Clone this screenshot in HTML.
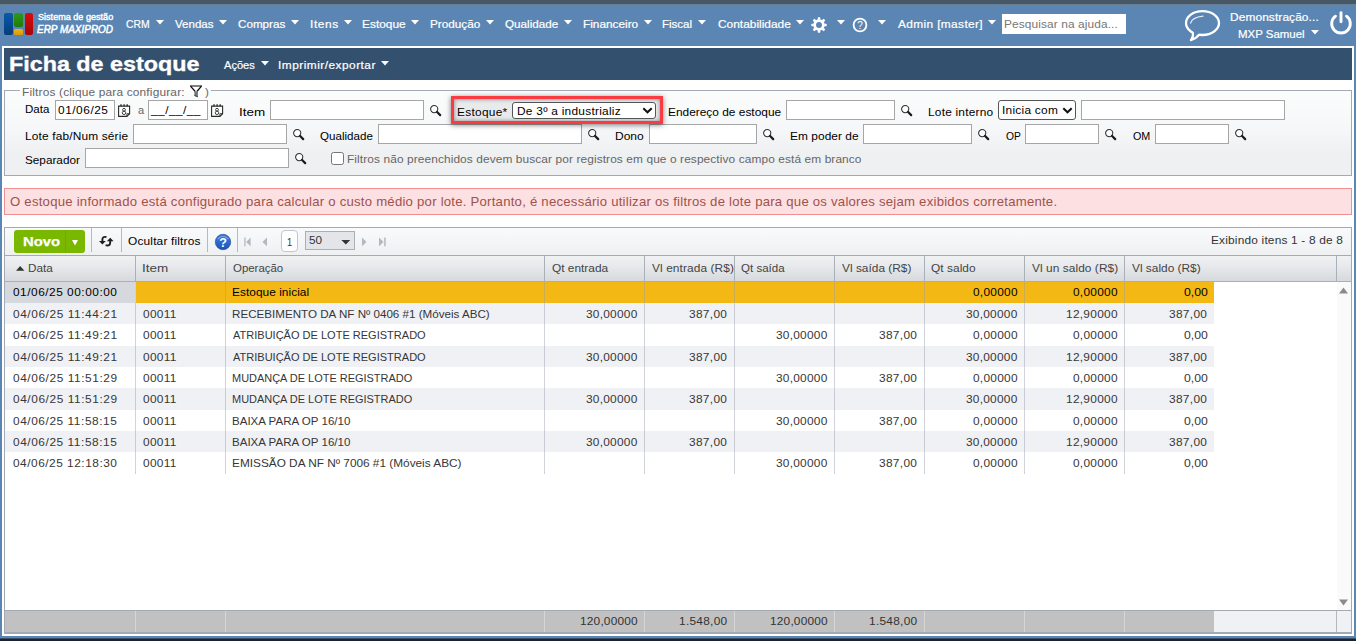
<!DOCTYPE html>
<html><head><meta charset="utf-8"><title>Ficha de estoque</title>
<style>
html,body{margin:0;padding:0}
body{width:1356px;height:641px;overflow:hidden;position:relative;background:#5b86b4;font-family:"Liberation Sans",sans-serif;font-size:12px}
body>div,body>span,body>svg{position:absolute;display:block}
body>div{box-sizing:border-box}
body>span{white-space:pre;line-height:20px;height:20px;transform-origin:0 0}
svg{overflow:visible}
</style></head><body>
<div style="left:0px;top:0px;width:1356px;height:4px;background:#465865"></div>
<div style="left:0px;top:4px;width:1356px;height:42px;background:#5b86b4"></div>
<div style="left:0px;top:4px;width:1356px;height:1px;background:#6b7f92"></div>
<div style="left:0px;top:638px;width:1356px;height:3px;background:#1a2430"></div>
<div style="left:0px;top:637.5px;width:1356px;height:1px;background:#3a5068"></div>
<div style="left:2px;top:46px;width:1352px;height:590px;background:#fff"></div>
<div style="left:4px;top:48px;width:1348px;height:32px;background:#34506f"></div>
<div style="left:4px;top:13px;width:8.7px;height:21.7px;border-radius:2px;background:linear-gradient(#0a5aa8,#053e7c)"></div>
<div style="left:14.2px;top:13px;width:8.7px;height:13.8px;border-radius:2px;background:linear-gradient(#2f9a14,#1f7a0c)"></div>
<div style="left:14.2px;top:28.5px;width:8.7px;height:6.3px;border-radius:1.5px;background:linear-gradient(#f0b31a,#d99808)"></div>
<div style="left:24.5px;top:13px;width:8.6px;height:21.7px;border-radius:2px;background:linear-gradient(#d80c0c,#a80404)"></div>
<span style="left:37.62px;top:6.50px;font-size:9.5px;color:#fff;transform:scaleX(0.9556);-webkit-text-stroke:.4px #fff;">Sistema de gestão</span>
<span style="left:37.45px;top:19.50px;font-size:10px;color:#fff;transform:scaleX(0.9961);font-style:italic;-webkit-text-stroke:.45px #fff;">ERP MAXIPROD</span>
<span style="left:126.03px;top:14.00px;font-size:11px;color:#fff;transform:scaleX(0.9432);-webkit-text-stroke:.2px #fff;">CRM</span>
<svg style="left:156px;top:20.3px;" width="8" height="5" viewBox="0 0 8 5"><path d="M0 0H8L4.0 4.5Z" fill="#fff"/></svg>
<span style="left:174.80px;top:14.00px;font-size:11px;color:#fff;transform:scaleX(1.0483);-webkit-text-stroke:.2px #fff;">Vendas</span>
<svg style="left:219.2px;top:20.3px;" width="8" height="5" viewBox="0 0 8 5"><path d="M0 0H8L4.0 4.5Z" fill="#fff"/></svg>
<span style="left:238.37px;top:14.00px;font-size:11px;color:#fff;transform:scaleX(1.0583);-webkit-text-stroke:.2px #fff;">Compras</span>
<svg style="left:290.9px;top:20.3px;" width="8" height="5" viewBox="0 0 8 5"><path d="M0 0H8L4.0 4.5Z" fill="#fff"/></svg>
<span style="left:309.62px;top:14.00px;font-size:11px;color:#fff;transform:scaleX(1.0800);letter-spacing:0.556px;-webkit-text-stroke:.2px #fff;">Itens</span>
<svg style="left:343.9px;top:20.3px;" width="8" height="5" viewBox="0 0 8 5"><path d="M0 0H8L4.0 4.5Z" fill="#fff"/></svg>
<span style="left:362.12px;top:14.00px;font-size:11px;color:#fff;transform:scaleX(1.0800);letter-spacing:0.008px;-webkit-text-stroke:.2px #fff;">Estoque</span>
<svg style="left:411.2px;top:20.3px;" width="8" height="5" viewBox="0 0 8 5"><path d="M0 0H8L4.0 4.5Z" fill="#fff"/></svg>
<span style="left:429.93px;top:14.00px;font-size:11px;color:#fff;transform:scaleX(1.0667);-webkit-text-stroke:.2px #fff;">Produção</span>
<svg style="left:486px;top:20.3px;" width="8" height="5" viewBox="0 0 8 5"><path d="M0 0H8L4.0 4.5Z" fill="#fff"/></svg>
<span style="left:504.77px;top:14.00px;font-size:11px;color:#fff;transform:scaleX(1.0619);-webkit-text-stroke:.2px #fff;">Qualidade</span>
<svg style="left:563.9px;top:20.3px;" width="8" height="5" viewBox="0 0 8 5"><path d="M0 0H8L4.0 4.5Z" fill="#fff"/></svg>
<span style="left:582.93px;top:14.00px;font-size:11px;color:#fff;transform:scaleX(1.0740);-webkit-text-stroke:.2px #fff;">Financeiro</span>
<svg style="left:644px;top:20.3px;" width="8" height="5" viewBox="0 0 8 5"><path d="M0 0H8L4.0 4.5Z" fill="#fff"/></svg>
<span style="left:662.46px;top:14.00px;font-size:11px;color:#fff;transform:scaleX(1.0444);-webkit-text-stroke:.2px #fff;">Fiscal</span>
<svg style="left:698px;top:20.3px;" width="8" height="5" viewBox="0 0 8 5"><path d="M0 0H8L4.0 4.5Z" fill="#fff"/></svg>
<span style="left:717.76px;top:14.00px;font-size:11px;color:#fff;transform:scaleX(1.0800);letter-spacing:0.012px;-webkit-text-stroke:.2px #fff;">Contabilidade</span>
<svg style="left:796px;top:20.3px;" width="8" height="5" viewBox="0 0 8 5"><path d="M0 0H8L4.0 4.5Z" fill="#fff"/></svg>
<span style="left:897.50px;top:14.00px;font-size:11px;color:#fff;transform:scaleX(1.0800);letter-spacing:0.341px;-webkit-text-stroke:.2px #fff;">Admin [master]</span>
<svg style="left:988px;top:20.3px;" width="8" height="5" viewBox="0 0 8 5"><path d="M0 0H8L4.0 4.5Z" fill="#fff"/></svg>
<svg style="left:836.8px;top:20.3px;" width="8" height="5" viewBox="0 0 8 5"><path d="M0 0H8L4.0 4.5Z" fill="#fff"/></svg>
<svg style="left:877.9px;top:20.3px;" width="8" height="5" viewBox="0 0 8 5"><path d="M0 0H8L4.0 4.5Z" fill="#fff"/></svg>
<svg style="left:811px;top:16.5px;" width="16" height="16" viewBox="0 0 16 16"><g transform="translate(8,8)" fill="none" stroke="#fff"><circle r="4.3" stroke-width="2.7"/><path d="M-1.5 -5.2H1.5L1.05 -7.7H-1.05Z" fill="#fff" stroke="none" transform="rotate(0)"/><path d="M-1.5 -5.2H1.5L1.05 -7.7H-1.05Z" fill="#fff" stroke="none" transform="rotate(45)"/><path d="M-1.5 -5.2H1.5L1.05 -7.7H-1.05Z" fill="#fff" stroke="none" transform="rotate(90)"/><path d="M-1.5 -5.2H1.5L1.05 -7.7H-1.05Z" fill="#fff" stroke="none" transform="rotate(135)"/><path d="M-1.5 -5.2H1.5L1.05 -7.7H-1.05Z" fill="#fff" stroke="none" transform="rotate(180)"/><path d="M-1.5 -5.2H1.5L1.05 -7.7H-1.05Z" fill="#fff" stroke="none" transform="rotate(225)"/><path d="M-1.5 -5.2H1.5L1.05 -7.7H-1.05Z" fill="#fff" stroke="none" transform="rotate(270)"/><path d="M-1.5 -5.2H1.5L1.05 -7.7H-1.05Z" fill="#fff" stroke="none" transform="rotate(315)"/></g></svg>
<svg style="left:852px;top:17px;" width="16" height="16" viewBox="0 0 16 16"><circle cx="8" cy="8" r="6.4" fill="none" stroke="#fff" stroke-width="1.8"/><text x="8" y="11.6" font-size="10" font-weight="400" fill="#fff" text-anchor="middle" font-family="Liberation Sans">?</text></svg>
<div style="left:1002px;top:14px;width:124px;height:19.5px;background:#fff"></div>
<span style="left:1003.52px;top:14.00px;font-size:11px;color:#777;transform:scaleX(1.0800);letter-spacing:0.100px;">Pesquisar na ajuda...</span>
<svg style="left:1183px;top:8px;" width="40" height="35" viewBox="0 0 40 35"><ellipse cx="19.5" cy="15.1" rx="16.5" ry="11.9" fill="none" stroke="#fff" stroke-width="2.3"/><path d="M10.6 22.6L8 32L17.2 24.6Z" fill="#5b86b4"/><path d="M9.9 24.9Q10.6 29 7.9 32.2Q12.6 31 16 27" fill="none" stroke="#fff" stroke-width="2.2" stroke-linejoin="round" stroke-linecap="round"/><path d="M7.6 15.2Q9 9.4 20 8.2" fill="none" stroke="#e6edf5" stroke-width="1.25" stroke-linecap="round"/></svg>
<span style="left:1230.12px;top:7.00px;font-size:11px;color:#fff;transform:scaleX(1.0800);letter-spacing:0.103px;-webkit-text-stroke:.2px #fff;">Demonstração...</span>
<span style="left:1238.46px;top:24.00px;font-size:11px;color:#fff;transform:scaleX(1.0416);-webkit-text-stroke:.2px #fff;">MXP Samuel</span>
<svg style="left:1311.4px;top:30px;" width="8" height="5" viewBox="0 0 8 5"><path d="M0 0H8L4.0 4.5Z" fill="#fff"/></svg>
<svg style="left:1329px;top:10px;" width="24" height="26" viewBox="0 0 24 26"><path d="M6.5 6.2 A9.3 9.3 0 1 0 17.5 6.2" fill="none" stroke="#fff" stroke-width="2.9" stroke-linecap="round"/><path d="M12 2.6V11.8" stroke="#fff" stroke-width="2.9" stroke-linecap="round"/></svg>
<span style="left:8.78px;top:53.50px;font-size:20.5px;color:#fff;transform:scaleX(1.1372);font-weight:700;-webkit-text-stroke:.35px #fff;">Ficha de estoque</span>
<span style="left:224.20px;top:55.00px;font-size:11px;color:#fff;transform:scaleX(1.0083);-webkit-text-stroke:.2px #fff;">Ações</span>
<svg style="left:261.2px;top:60.8px;" width="8" height="5" viewBox="0 0 8 5"><path d="M0 0H8L4.0 4.5Z" fill="#fff"/></svg>
<span style="left:277.62px;top:55.00px;font-size:11px;color:#fff;transform:scaleX(1.0800);letter-spacing:0.442px;-webkit-text-stroke:.2px #fff;">Imprimir/exportar</span>
<svg style="left:381.2px;top:60.8px;" width="8" height="5" viewBox="0 0 8 5"><path d="M0 0H8L4.0 4.5Z" fill="#fff"/></svg>
<div style="left:4px;top:90px;width:1348px;height:86px;border:1px solid #a3aab3;background:linear-gradient(#fbfcfc 0,#f6f7f8 45%,#eff0f2 75%)"></div>
<div style="left:20px;top:90px;width:191px;height:1px;background:#fdfdfd"></div>
<span style="left:21.82px;top:82.00px;font-size:11px;color:#666;transform:scaleX(1.0800);letter-spacing:0.162px;">Filtros (clique para configurar:</span>
<svg style="left:190px;top:84.5px;" width="13" height="13" viewBox="0 0 13 13"><path d="M0 1H12" stroke="#0a0a0a" stroke-width="1.05"/><path d="M0.5 1.2L5.2 6.5M11.5 1.2L6.9 6.5" stroke="#0a0a0a" stroke-width="1.25" fill="none"/><path d="M4.35 6.2H7.9V12L4.35 10.7Z" fill="#757575"/><path d="M4.35 10.5L7.9 11.8" stroke="#333" stroke-width=".9"/></svg>
<span style="left:205.24px;top:82.00px;font-size:11px;color:#666;transform:scaleX(1.0545);">)</span>
<span style="left:24.85px;top:99.00px;font-size:11px;color:#000;transform:scaleX(1.0472);">Data</span>
<div style="left:55px;top:100px;width:60px;height:20px;border:1px solid #a6a6a6;background:#fff"></div>
<span style="left:57.66px;top:100.00px;font-size:11px;color:#000;transform:scaleX(1.0800);letter-spacing:0.491px;">01/06/25</span>
<svg style="left:118px;top:104px;" width="13" height="14" viewBox="0 0 13 14"><path d="M0.6 2.1H11.6V9.7L8.9 12.4H0.6Z" fill="#fff" stroke="#2a2a2a" stroke-width="1.1" stroke-linejoin="miter"/><path d="M8.9 12.4V9.7H11.6" fill="none" stroke="#2a2a2a" stroke-width=".9"/><path d="M3 0.3V2.2M6.1 0.3V2.2M9.2 0.3V2.2" stroke="#2a2a2a" stroke-width="1.3"/><g fill="none" stroke="#3a3a3a" stroke-width=".95"><ellipse cx="6" cy="5.75" rx="1.4" ry="1.4"/><ellipse cx="6" cy="8.85" rx="1.75" ry="1.7"/></g></svg>
<span style="left:138.00px;top:100.00px;font-size:11px;color:#666;transform:scaleX(1.0000);">a</span>
<div style="left:148px;top:100px;width:59.5px;height:20px;border:1px solid #a6a6a6;background:#fff"></div>
<span style="left:150.87px;top:100.00px;font-size:11px;color:#000;transform:scaleX(1.0800);letter-spacing:0.422px;">__/__/__</span>
<svg style="left:211px;top:104px;" width="13" height="14" viewBox="0 0 13 14"><path d="M0.6 2.1H11.6V9.7L8.9 12.4H0.6Z" fill="#fff" stroke="#2a2a2a" stroke-width="1.1" stroke-linejoin="miter"/><path d="M8.9 12.4V9.7H11.6" fill="none" stroke="#2a2a2a" stroke-width=".9"/><path d="M3 0.3V2.2M6.1 0.3V2.2M9.2 0.3V2.2" stroke="#2a2a2a" stroke-width="1.3"/><g fill="none" stroke="#3a3a3a" stroke-width=".95"><ellipse cx="6" cy="5.75" rx="1.4" ry="1.4"/><ellipse cx="6" cy="8.85" rx="1.75" ry="1.7"/></g></svg>
<span style="left:239.38px;top:102.00px;font-size:11px;color:#000;transform:scaleX(1.2203);">Item</span>
<div style="left:270px;top:100px;width:154px;height:20px;border:1px solid #a6a6a6;background:#fff"></div>
<svg style="left:429.8px;top:104.7px;" width="12" height="12" viewBox="0 0 12 12"><circle cx="4.2" cy="4.1" r="3.6" fill="#fdfdfd" stroke="#2e2e2e" stroke-width="1.05"/><path d="M7.1 7L10.2 10.1" stroke="#1c1c1c" stroke-width="2.2" stroke-linecap="round"/></svg>
<div style="left:451px;top:96px;width:212px;height:28px;z-index:2;box-sizing:border-box;border:3px solid #fa3c42;background:#e9eaec;box-shadow:0 1px 5px rgba(0,0,0,.5), inset 0 0 4px rgba(0,0,0,.45)"></div>
<span style="left:456.82px;top:102.00px;font-size:11px;color:#000;transform:scaleX(1.0800);letter-spacing:0.267px;z-index:3;">Estoque*</span>
<div style="left:512px;top:102px;width:144px;height:17px;z-index:3;border:1px solid #555;border-radius:3px;background:#fff"></div>
<span style="left:516.62px;top:101.00px;font-size:11px;color:#000;transform:scaleX(1.0800);letter-spacing:0.239px;z-index:4;">De 3º a industrializ</span>
<svg style="left:641.5px;top:107px;z-index:4;" width="11" height="7" viewBox="0 0 11 7"><path d="M1.3 1.3L5.5 5.3L9.7 1.3" fill="none" stroke="#111" stroke-width="2"/></svg>
<span style="left:668.32px;top:102.00px;font-size:11px;color:#000;transform:scaleX(1.0800);letter-spacing:0.008px;">Endereço de estoque</span>
<div style="left:786px;top:100px;width:109px;height:20px;border:1px solid #a6a6a6;background:#fff"></div>
<svg style="left:900.9px;top:104.7px;" width="12" height="12" viewBox="0 0 12 12"><circle cx="4.2" cy="4.1" r="3.6" fill="#fdfdfd" stroke="#2e2e2e" stroke-width="1.05"/><path d="M7.1 7L10.2 10.1" stroke="#1c1c1c" stroke-width="2.2" stroke-linecap="round"/></svg>
<span style="left:927.82px;top:102.00px;font-size:11px;color:#000;transform:scaleX(1.0800);letter-spacing:0.194px;">Lote interno</span>
<div style="left:998px;top:100px;width:77.5px;height:20px;border:1px solid #555;border-radius:3px;background:#fff"></div>
<span style="left:1002.12px;top:100.00px;font-size:11px;color:#000;transform:scaleX(1.0800);letter-spacing:0.240px;">Inicia com</span>
<svg style="left:1062px;top:107px;" width="11" height="7" viewBox="0 0 11 7"><path d="M1.3 1.3L5.5 5.3L9.7 1.3" fill="none" stroke="#111" stroke-width="2"/></svg>
<div style="left:1081px;top:100px;width:204px;height:20px;border:1px solid #a6a6a6;background:#fff"></div>
<span style="left:24.82px;top:126.00px;font-size:11px;color:#000;transform:scaleX(1.0800);letter-spacing:0.146px;">Lote fab/Num série</span>
<div style="left:133px;top:124px;width:154px;height:20px;border:1px solid #a6a6a6;background:#fff"></div>
<svg style="left:293px;top:128.7px;" width="12" height="12" viewBox="0 0 12 12"><circle cx="4.2" cy="4.1" r="3.6" fill="#fdfdfd" stroke="#2e2e2e" stroke-width="1.05"/><path d="M7.1 7L10.2 10.1" stroke="#1c1c1c" stroke-width="2.2" stroke-linecap="round"/></svg>
<span style="left:320.17px;top:126.00px;font-size:11px;color:#000;transform:scaleX(1.0538);">Qualidade</span>
<div style="left:378.4px;top:124px;width:203.20000000000005px;height:20px;border:1px solid #a6a6a6;background:#fff"></div>
<svg style="left:587.8px;top:128.7px;" width="12" height="12" viewBox="0 0 12 12"><circle cx="4.2" cy="4.1" r="3.6" fill="#fdfdfd" stroke="#2e2e2e" stroke-width="1.05"/><path d="M7.1 7L10.2 10.1" stroke="#1c1c1c" stroke-width="2.2" stroke-linecap="round"/></svg>
<span style="left:614.71px;top:126.00px;font-size:11px;color:#000;transform:scaleX(1.0909);">Dono</span>
<div style="left:648.5px;top:124px;width:108.29999999999995px;height:20px;border:1px solid #a6a6a6;background:#fff"></div>
<svg style="left:763px;top:128.7px;" width="12" height="12" viewBox="0 0 12 12"><circle cx="4.2" cy="4.1" r="3.6" fill="#fdfdfd" stroke="#2e2e2e" stroke-width="1.05"/><path d="M7.1 7L10.2 10.1" stroke="#1c1c1c" stroke-width="2.2" stroke-linecap="round"/></svg>
<span style="left:789.72px;top:126.00px;font-size:11px;color:#000;transform:scaleX(1.0800);letter-spacing:0.054px;">Em poder de</span>
<div style="left:863.2px;top:124px;width:108.5px;height:20px;border:1px solid #a6a6a6;background:#fff"></div>
<svg style="left:977.9px;top:128.7px;" width="12" height="12" viewBox="0 0 12 12"><circle cx="4.2" cy="4.1" r="3.6" fill="#fdfdfd" stroke="#2e2e2e" stroke-width="1.05"/><path d="M7.1 7L10.2 10.1" stroke="#1c1c1c" stroke-width="2.2" stroke-linecap="round"/></svg>
<span style="left:1005.73px;top:126.00px;font-size:11px;color:#000;transform:scaleX(0.9356);">OP</span>
<div style="left:1025px;top:124px;width:74px;height:20px;border:1px solid #a6a6a6;background:#fff"></div>
<svg style="left:1104.8px;top:128.7px;" width="12" height="12" viewBox="0 0 12 12"><circle cx="4.2" cy="4.1" r="3.6" fill="#fdfdfd" stroke="#2e2e2e" stroke-width="1.05"/><path d="M7.1 7L10.2 10.1" stroke="#1c1c1c" stroke-width="2.2" stroke-linecap="round"/></svg>
<span style="left:1132.51px;top:126.00px;font-size:11px;color:#000;transform:scaleX(0.9785);">OM</span>
<div style="left:1155.3px;top:124px;width:73.40000000000009px;height:20px;border:1px solid #a6a6a6;background:#fff"></div>
<svg style="left:1234.9px;top:128.7px;" width="12" height="12" viewBox="0 0 12 12"><circle cx="4.2" cy="4.1" r="3.6" fill="#fdfdfd" stroke="#2e2e2e" stroke-width="1.05"/><path d="M7.1 7L10.2 10.1" stroke="#1c1c1c" stroke-width="2.2" stroke-linecap="round"/></svg>
<span style="left:25.37px;top:150.00px;font-size:11px;color:#000;transform:scaleX(1.0680);">Separador</span>
<div style="left:85.3px;top:148px;width:203.39999999999998px;height:20px;border:1px solid #a6a6a6;background:#fff"></div>
<svg style="left:294.7px;top:152.7px;" width="12" height="12" viewBox="0 0 12 12"><circle cx="4.2" cy="4.1" r="3.6" fill="#fdfdfd" stroke="#2e2e2e" stroke-width="1.05"/><path d="M7.1 7L10.2 10.1" stroke="#1c1c1c" stroke-width="2.2" stroke-linecap="round"/></svg>
<div style="left:331px;top:152px;width:13px;height:13px;border:1px solid #767676;border-radius:2.5px;background:#fff"></div>
<span style="left:346.52px;top:149.00px;font-size:11px;color:#666;transform:scaleX(1.0800);letter-spacing:0.096px;">Filtros não preenchidos devem buscar por registros em que o respectivo campo está em branco</span>
<div style="left:4px;top:188px;width:1348px;height:27px;border:1px solid #f19090;background:#fce0e2"></div>
<span style="left:9.96px;top:192.00px;font-size:12.2px;color:#a0524c;transform:scaleX(1.0800);letter-spacing:0.212px;">O estoque informado está configurado para calcular o custo médio por lote. Portanto, é necessário utilizar os filtros de lote para que os valores sejam exibidos corretamente.</span>
<div style="left:4px;top:227px;width:1348px;height:407px;border:1px solid #a3aab3;border-bottom-width:2px;background:#fff"></div>
<div style="left:5px;top:228px;width:1346px;height:27px;background:linear-gradient(#f9fafb,#eef0f2)"></div>
<div style="left:14px;top:230px;width:71px;height:23px;border-radius:3px;background:#7ab800"></div>
<div style="left:65px;top:230px;width:1px;height:23px;background:#70aa04"></div>
<span style="left:23.29px;top:232.00px;font-size:12.3px;color:#fff;transform:scaleX(1.2068);font-weight:700;-webkit-text-stroke:.25px #fff;">Novo</span>
<svg style="left:71.8px;top:239.6px;" width="7" height="7" viewBox="0 0 7 7"><path d="M0 0H6L3 5.4Z" fill="#fff"/></svg>
<div style="left:91px;top:228px;width:1px;height:24px;background:#b4bac2"></div>
<div style="left:121px;top:228px;width:1px;height:24px;background:#b4bac2"></div>
<div style="left:207px;top:228px;width:1px;height:24px;background:#b4bac2"></div>
<div style="left:237px;top:228px;width:1px;height:24px;background:#b4bac2"></div>
<svg style="left:98.9px;top:235.8px;" width="15" height="11" viewBox="0 0 15 11"><g fill="none" stroke="#1e1e1e" stroke-width="1.9"><path d="M7.5 1.2Q3.4 0 3.4 3.6V5.6"/><path d="M6.6 9.1Q11.2 10.4 11.2 6.6V4.8"/></g><path d="M0 5.1H6.8L3.4 8.6Z" fill="#1e1e1e"/><path d="M7.8 5.3H14.6L11.2 1.8Z" fill="#1e1e1e"/></svg>
<span style="left:128.36px;top:231.00px;font-size:11px;color:#000;transform:scaleX(1.0800);letter-spacing:0.164px;">Ocultar filtros</span>
<svg style="left:214.1px;top:233px;" width="18" height="18" viewBox="0 0 18 18"><defs><linearGradient id="hb" x1="0" y1="0" x2="0" y2="1"><stop offset="0" stop-color="#3f78d4"/><stop offset=".45" stop-color="#2f6ccd"/><stop offset="1" stop-color="#1d52b4"/></linearGradient></defs><circle cx="9" cy="9" r="7.7" fill="url(#hb)" stroke="#2450a6" stroke-width=".7"/><path d="M3.6 6.2Q9 0.2 14.4 6.2" fill="none" stroke="#86b2ee" stroke-width="1.1" opacity=".8"/><text x="9" y="14.1" font-size="12.5" font-weight="700" fill="#fff" text-anchor="middle" font-family="Liberation Sans">?</text></svg>
<svg style="left:243.8px;top:237px;" width="8" height="10" viewBox="0 0 8 10"><path d="M0.3 0.5H1.6V9.3H0.3Z M6.6 0.5V9.3L2.2 4.9Z" fill="#b3b8bf"/></svg>
<svg style="left:262px;top:237px;" width="6" height="10" viewBox="0 0 6 10"><path d="M5 0.5V9.3L0.5 4.9Z" fill="#b3b8bf"/></svg>
<div style="left:281px;top:230px;width:17px;height:22px;box-sizing:border-box;border:1px solid #c3c7cc;border-radius:4px;background:#fff"></div>
<span style="left:286.77px;top:232.00px;font-size:11px;color:#333;transform:scaleX(0.8421);">1</span>
<div style="left:305px;top:231px;width:50px;height:19px;box-sizing:border-box;border:1px solid #aab0b7;background:#e3e5e8"></div>
<span style="left:308.87px;top:230.00px;font-size:11px;color:#333;transform:scaleX(1.0667);">50</span>
<svg style="left:341px;top:240px;" width="10" height="5" viewBox="0 0 10 5"><path d="M0.4 0H9.2L4.8 4.6Z" fill="#333"/></svg>
<svg style="left:361px;top:237px;" width="6" height="10" viewBox="0 0 6 10"><path d="M1 0.5V9.3L5.5 4.9Z" fill="#b3b8bf"/></svg>
<svg style="left:378px;top:237px;" width="8" height="10" viewBox="0 0 8 10"><path d="M6.2 0.5H7.7V9.3H6.2Z M1 0.5V9.3L5.6 4.9Z" fill="#b3b8bf"/></svg>
<span style="left:1210.72px;top:230.00px;font-size:11px;color:#333;transform:scaleX(1.0800);letter-spacing:0.173px;">Exibindo itens 1 - 8 de 8</span>
<div style="left:5px;top:255px;width:1346px;height:1px;background:#a3aab3"></div>
<div style="left:5px;top:256px;width:1346px;height:25px;background:linear-gradient(#eff1f3 0,#e6e8eb 45%,#d6d9dd 100%)"></div>
<div style="left:5px;top:281px;width:1346px;height:1px;background:#a9afb7"></div>
<div style="left:135px;top:256px;width:1px;height:25px;background:#aab0b8"></div>
<div style="left:225px;top:256px;width:1px;height:25px;background:#aab0b8"></div>
<div style="left:544px;top:256px;width:1px;height:25px;background:#aab0b8"></div>
<div style="left:644px;top:256px;width:1px;height:25px;background:#aab0b8"></div>
<div style="left:734px;top:256px;width:1px;height:25px;background:#aab0b8"></div>
<div style="left:834px;top:256px;width:1px;height:25px;background:#aab0b8"></div>
<div style="left:924px;top:256px;width:1px;height:25px;background:#aab0b8"></div>
<div style="left:1024px;top:256px;width:1px;height:25px;background:#aab0b8"></div>
<div style="left:1124px;top:256px;width:1px;height:25px;background:#aab0b8"></div>
<div style="left:1336px;top:256px;width:1px;height:25px;background:#aab0b8"></div>
<svg style="left:15.8px;top:266.4px;" width="9" height="5" viewBox="0 0 9 5"><path d="M0 4.7H8.4L4.2 0.1Z" fill="#333"/></svg>
<span style="left:28.23px;top:258.00px;font-size:11px;color:#444;transform:scaleX(1.0652);">Data</span>
<span style="left:141.57px;top:258.00px;font-size:11px;color:#444;transform:scaleX(1.2253);">Item</span>
<span style="left:232.78px;top:258.00px;font-size:11px;color:#444;transform:scaleX(1.0392);">Operação</span>
<span style="left:551.56px;top:258.00px;font-size:11px;color:#444;transform:scaleX(1.0796);">Qt entrada</span>
<span style="left:652.10px;top:258.00px;font-size:11px;color:#444;transform:scaleX(1.0800);letter-spacing:0.091px;">Vl entrada (R$)</span>
<span style="left:741.48px;top:258.00px;font-size:11px;color:#444;transform:scaleX(1.0488);">Qt saída</span>
<span style="left:842.00px;top:258.00px;font-size:11px;color:#444;transform:scaleX(1.0800);letter-spacing:0.009px;">Vl saída (R$)</span>
<span style="left:931.46px;top:258.00px;font-size:11px;color:#444;transform:scaleX(1.0800);letter-spacing:0.053px;">Qt saldo</span>
<span style="left:1032.00px;top:258.00px;font-size:11px;color:#444;transform:scaleX(1.0800);letter-spacing:0.061px;">Vl un saldo (R$)</span>
<span style="left:1132.10px;top:258.00px;font-size:11px;color:#444;transform:scaleX(1.0800);">Vl saldo (R$)</span>
<div style="left:5px;top:282px;width:130px;height:21px;background:#d5d8dd"></div>
<div style="left:136px;top:282px;width:1078px;height:21px;background:#f4b814"></div>
<span style="left:12.56px;top:282.00px;font-size:11px;color:#000;transform:scaleX(1.0800);letter-spacing:0.470px;">01/06/25 00:00:00</span>
<span style="left:232.22px;top:282.00px;font-size:11px;color:#000;transform:scaleX(1.0800);letter-spacing:0.034px;">Estoque inicial</span>
<span style="left:972.96px;top:282.00px;font-size:11px;color:#000;transform:scaleX(1.0800);letter-spacing:0.239px;">0,00000</span>
<span style="left:1072.96px;top:282.00px;font-size:11px;color:#000;transform:scaleX(1.0800);letter-spacing:0.239px;">0,00000</span>
<span style="left:1183.54px;top:282.00px;font-size:11px;color:#000;transform:scaleX(1.1122);">0,00</span>
<div style="left:5px;top:303px;width:1209px;height:21.329999999999984px;background:#f0f1f4"></div>
<span style="left:12.56px;top:304.00px;font-size:11px;color:#363636;transform:scaleX(1.0800);letter-spacing:0.533px;">04/06/25 11:44:21</span>
<span style="left:142.56px;top:304.00px;font-size:11px;color:#363636;transform:scaleX(1.0800);letter-spacing:0.266px;">00011</span>
<span style="left:232.24px;top:304.00px;font-size:11px;color:#363636;transform:scaleX(1.0559);">RECEBIMENTO DA NF Nº 0406 #1 (Móveis ABC)</span>
<span style="left:586.06px;top:304.00px;font-size:11px;color:#363636;transform:scaleX(1.0800);letter-spacing:0.225px;">30,00000</span>
<span style="left:689.36px;top:304.00px;font-size:11px;color:#363636;transform:scaleX(1.0800);letter-spacing:0.302px;">387,00</span>
<span style="left:966.06px;top:304.00px;font-size:11px;color:#363636;transform:scaleX(1.0800);letter-spacing:0.225px;">30,00000</span>
<span style="left:1065.79px;top:304.00px;font-size:11px;color:#363636;transform:scaleX(1.0800);letter-spacing:0.261px;">12,90000</span>
<span style="left:1169.36px;top:304.00px;font-size:11px;color:#363636;transform:scaleX(1.0800);letter-spacing:0.302px;">387,00</span>
<span style="left:12.56px;top:325.00px;font-size:11px;color:#363636;transform:scaleX(1.0800);letter-spacing:0.533px;">04/06/25 11:49:21</span>
<span style="left:142.56px;top:325.00px;font-size:11px;color:#363636;transform:scaleX(1.0800);letter-spacing:0.266px;">00011</span>
<span style="left:233.30px;top:325.00px;font-size:11px;color:#363636;transform:scaleX(1.0018);">ATRIBUIÇÃO DE LOTE REGISTRADO</span>
<span style="left:776.06px;top:325.00px;font-size:11px;color:#363636;transform:scaleX(1.0800);letter-spacing:0.225px;">30,00000</span>
<span style="left:879.36px;top:325.00px;font-size:11px;color:#363636;transform:scaleX(1.0800);letter-spacing:0.302px;">387,00</span>
<span style="left:972.96px;top:325.00px;font-size:11px;color:#363636;transform:scaleX(1.0800);letter-spacing:0.239px;">0,00000</span>
<span style="left:1072.96px;top:325.00px;font-size:11px;color:#363636;transform:scaleX(1.0800);letter-spacing:0.239px;">0,00000</span>
<span style="left:1183.54px;top:325.00px;font-size:11px;color:#363636;transform:scaleX(1.1122);">0,00</span>
<div style="left:5px;top:345.67px;width:1209px;height:21.329999999999984px;background:#f0f1f4"></div>
<span style="left:12.56px;top:347.00px;font-size:11px;color:#363636;transform:scaleX(1.0800);letter-spacing:0.533px;">04/06/25 11:49:21</span>
<span style="left:142.56px;top:347.00px;font-size:11px;color:#363636;transform:scaleX(1.0800);letter-spacing:0.266px;">00011</span>
<span style="left:233.30px;top:347.00px;font-size:11px;color:#363636;transform:scaleX(1.0018);">ATRIBUIÇÃO DE LOTE REGISTRADO</span>
<span style="left:586.06px;top:347.00px;font-size:11px;color:#363636;transform:scaleX(1.0800);letter-spacing:0.225px;">30,00000</span>
<span style="left:689.36px;top:347.00px;font-size:11px;color:#363636;transform:scaleX(1.0800);letter-spacing:0.302px;">387,00</span>
<span style="left:966.06px;top:347.00px;font-size:11px;color:#363636;transform:scaleX(1.0800);letter-spacing:0.225px;">30,00000</span>
<span style="left:1065.79px;top:347.00px;font-size:11px;color:#363636;transform:scaleX(1.0800);letter-spacing:0.261px;">12,90000</span>
<span style="left:1169.36px;top:347.00px;font-size:11px;color:#363636;transform:scaleX(1.0800);letter-spacing:0.302px;">387,00</span>
<span style="left:12.56px;top:368.00px;font-size:11px;color:#363636;transform:scaleX(1.0800);letter-spacing:0.533px;">04/06/25 11:51:29</span>
<span style="left:142.56px;top:368.00px;font-size:11px;color:#363636;transform:scaleX(1.0800);letter-spacing:0.266px;">00011</span>
<span style="left:232.30px;top:368.00px;font-size:11px;color:#363636;transform:scaleX(0.9961);">MUDANÇA DE LOTE REGISTRADO</span>
<span style="left:776.06px;top:368.00px;font-size:11px;color:#363636;transform:scaleX(1.0800);letter-spacing:0.225px;">30,00000</span>
<span style="left:879.36px;top:368.00px;font-size:11px;color:#363636;transform:scaleX(1.0800);letter-spacing:0.302px;">387,00</span>
<span style="left:972.96px;top:368.00px;font-size:11px;color:#363636;transform:scaleX(1.0800);letter-spacing:0.239px;">0,00000</span>
<span style="left:1072.96px;top:368.00px;font-size:11px;color:#363636;transform:scaleX(1.0800);letter-spacing:0.239px;">0,00000</span>
<span style="left:1183.54px;top:368.00px;font-size:11px;color:#363636;transform:scaleX(1.1122);">0,00</span>
<div style="left:5px;top:388.33px;width:1209px;height:21.340000000000032px;background:#f0f1f4"></div>
<span style="left:12.56px;top:389.00px;font-size:11px;color:#363636;transform:scaleX(1.0800);letter-spacing:0.533px;">04/06/25 11:51:29</span>
<span style="left:142.56px;top:389.00px;font-size:11px;color:#363636;transform:scaleX(1.0800);letter-spacing:0.266px;">00011</span>
<span style="left:232.30px;top:389.00px;font-size:11px;color:#363636;transform:scaleX(0.9961);">MUDANÇA DE LOTE REGISTRADO</span>
<span style="left:586.06px;top:389.00px;font-size:11px;color:#363636;transform:scaleX(1.0800);letter-spacing:0.225px;">30,00000</span>
<span style="left:689.36px;top:389.00px;font-size:11px;color:#363636;transform:scaleX(1.0800);letter-spacing:0.302px;">387,00</span>
<span style="left:966.06px;top:389.00px;font-size:11px;color:#363636;transform:scaleX(1.0800);letter-spacing:0.225px;">30,00000</span>
<span style="left:1065.79px;top:389.00px;font-size:11px;color:#363636;transform:scaleX(1.0800);letter-spacing:0.261px;">12,90000</span>
<span style="left:1169.36px;top:389.00px;font-size:11px;color:#363636;transform:scaleX(1.0800);letter-spacing:0.302px;">387,00</span>
<span style="left:12.56px;top:411.00px;font-size:11px;color:#363636;transform:scaleX(1.0800);letter-spacing:0.517px;">04/06/25 11:58:15</span>
<span style="left:142.56px;top:411.00px;font-size:11px;color:#363636;transform:scaleX(1.0800);letter-spacing:0.266px;">00011</span>
<span style="left:232.25px;top:411.00px;font-size:11px;color:#363636;transform:scaleX(1.0501);">BAIXA PARA OP 16/10</span>
<span style="left:776.06px;top:411.00px;font-size:11px;color:#363636;transform:scaleX(1.0800);letter-spacing:0.225px;">30,00000</span>
<span style="left:879.36px;top:411.00px;font-size:11px;color:#363636;transform:scaleX(1.0800);letter-spacing:0.302px;">387,00</span>
<span style="left:972.96px;top:411.00px;font-size:11px;color:#363636;transform:scaleX(1.0800);letter-spacing:0.239px;">0,00000</span>
<span style="left:1072.96px;top:411.00px;font-size:11px;color:#363636;transform:scaleX(1.0800);letter-spacing:0.239px;">0,00000</span>
<span style="left:1183.54px;top:411.00px;font-size:11px;color:#363636;transform:scaleX(1.1122);">0,00</span>
<div style="left:5px;top:431px;width:1209px;height:21.329999999999984px;background:#f0f1f4"></div>
<span style="left:12.56px;top:432.00px;font-size:11px;color:#363636;transform:scaleX(1.0800);letter-spacing:0.517px;">04/06/25 11:58:15</span>
<span style="left:142.56px;top:432.00px;font-size:11px;color:#363636;transform:scaleX(1.0800);letter-spacing:0.266px;">00011</span>
<span style="left:232.25px;top:432.00px;font-size:11px;color:#363636;transform:scaleX(1.0501);">BAIXA PARA OP 16/10</span>
<span style="left:586.06px;top:432.00px;font-size:11px;color:#363636;transform:scaleX(1.0800);letter-spacing:0.225px;">30,00000</span>
<span style="left:689.36px;top:432.00px;font-size:11px;color:#363636;transform:scaleX(1.0800);letter-spacing:0.302px;">387,00</span>
<span style="left:966.06px;top:432.00px;font-size:11px;color:#363636;transform:scaleX(1.0800);letter-spacing:0.225px;">30,00000</span>
<span style="left:1065.79px;top:432.00px;font-size:11px;color:#363636;transform:scaleX(1.0800);letter-spacing:0.261px;">12,90000</span>
<span style="left:1169.36px;top:432.00px;font-size:11px;color:#363636;transform:scaleX(1.0800);letter-spacing:0.302px;">387,00</span>
<span style="left:12.56px;top:453.00px;font-size:11px;color:#363636;transform:scaleX(1.0800);letter-spacing:0.470px;">04/06/25 12:18:30</span>
<span style="left:142.56px;top:453.00px;font-size:11px;color:#363636;transform:scaleX(1.0800);letter-spacing:0.266px;">00011</span>
<span style="left:232.23px;top:453.00px;font-size:11px;color:#363636;transform:scaleX(1.0739);">EMISSÃO DA NF Nº 7006 #1 (Móveis ABC)</span>
<span style="left:776.06px;top:453.00px;font-size:11px;color:#363636;transform:scaleX(1.0800);letter-spacing:0.225px;">30,00000</span>
<span style="left:879.36px;top:453.00px;font-size:11px;color:#363636;transform:scaleX(1.0800);letter-spacing:0.302px;">387,00</span>
<span style="left:972.96px;top:453.00px;font-size:11px;color:#363636;transform:scaleX(1.0800);letter-spacing:0.239px;">0,00000</span>
<span style="left:1072.96px;top:453.00px;font-size:11px;color:#363636;transform:scaleX(1.0800);letter-spacing:0.239px;">0,00000</span>
<span style="left:1183.54px;top:453.00px;font-size:11px;color:#363636;transform:scaleX(1.1122);">0,00</span>
<div style="left:135px;top:282px;width:1px;height:191.67px;background:rgba(150,158,170,.45)"></div>
<div style="left:225px;top:282px;width:1px;height:191.67px;background:rgba(150,158,170,.45)"></div>
<div style="left:544px;top:282px;width:1px;height:191.67px;background:rgba(150,158,170,.45)"></div>
<div style="left:644px;top:282px;width:1px;height:191.67px;background:rgba(150,158,170,.45)"></div>
<div style="left:734px;top:282px;width:1px;height:191.67px;background:rgba(150,158,170,.45)"></div>
<div style="left:834px;top:282px;width:1px;height:191.67px;background:rgba(150,158,170,.45)"></div>
<div style="left:924px;top:282px;width:1px;height:191.67px;background:rgba(150,158,170,.45)"></div>
<div style="left:1024px;top:282px;width:1px;height:191.67px;background:rgba(150,158,170,.45)"></div>
<div style="left:1124px;top:282px;width:1px;height:191.67px;background:rgba(150,158,170,.45)"></div>
<div style="left:1337px;top:282px;width:14px;height:328px;background:#fafafa"></div>
<svg style="left:1339px;top:287px;" width="9" height="7" viewBox="0 0 9 7"><path d="M0 6.4H9L4.5 0.4Z" fill="#8b8b8b"/></svg>
<svg style="left:1339px;top:599px;" width="9" height="7" viewBox="0 0 9 7"><path d="M0 0.4H9L4.5 6.6Z" fill="#8b8b8b"/></svg>
<div style="left:5px;top:610px;width:1346px;height:1px;background:#a3aab3"></div>
<div style="left:5px;top:611px;width:1209px;height:21px;background:#c1c1c1"></div>
<div style="left:1214px;top:611px;width:137px;height:21px;background:#f0f1f4"></div>
<div style="left:135px;top:611px;width:1px;height:21px;background:#d6d6d6"></div>
<div style="left:225px;top:611px;width:1px;height:21px;background:#d6d6d6"></div>
<div style="left:544px;top:611px;width:1px;height:21px;background:#d6d6d6"></div>
<div style="left:644px;top:611px;width:1px;height:21px;background:#d6d6d6"></div>
<div style="left:734px;top:611px;width:1px;height:21px;background:#d6d6d6"></div>
<div style="left:834px;top:611px;width:1px;height:21px;background:#d6d6d6"></div>
<div style="left:924px;top:611px;width:1px;height:21px;background:#d6d6d6"></div>
<div style="left:1024px;top:611px;width:1px;height:21px;background:#d6d6d6"></div>
<div style="left:1124px;top:611px;width:1px;height:21px;background:#d6d6d6"></div>
<div style="left:1336px;top:611px;width:1px;height:21px;background:#b3b8bf"></div>
<span style="left:579.89px;top:611.00px;font-size:11px;color:#333;transform:scaleX(1.0800);letter-spacing:0.172px;">120,00000</span>
<span style="left:679.49px;top:611.00px;font-size:11px;color:#333;transform:scaleX(1.0800);letter-spacing:0.249px;">1.548,00</span>
<span style="left:769.89px;top:611.00px;font-size:11px;color:#333;transform:scaleX(1.0800);letter-spacing:0.172px;">120,00000</span>
<span style="left:869.49px;top:611.00px;font-size:11px;color:#333;transform:scaleX(1.0800);letter-spacing:0.249px;">1.548,00</span>
</body></html>
